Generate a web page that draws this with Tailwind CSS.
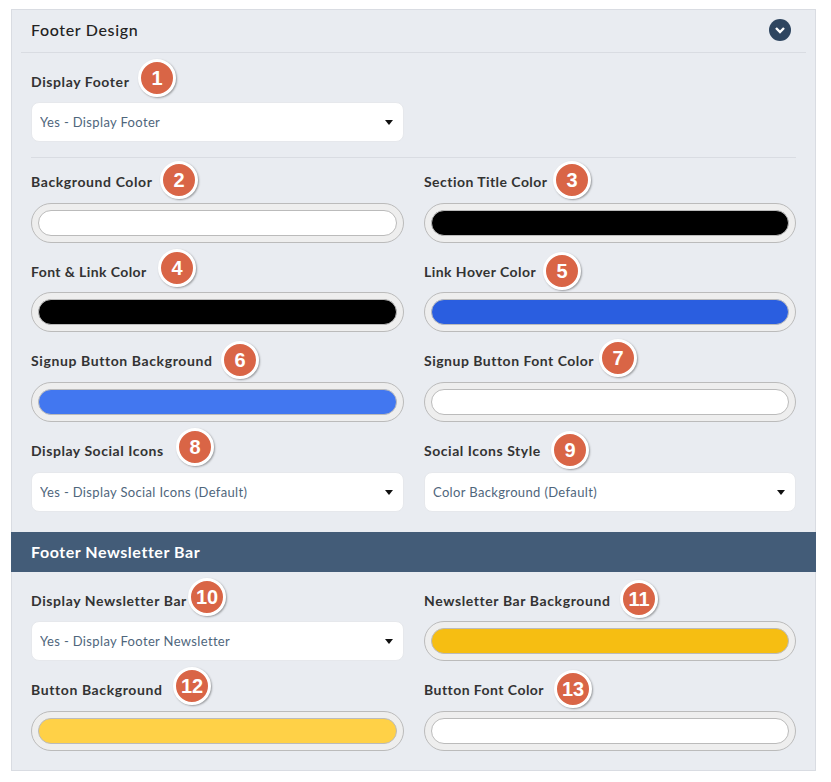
<!DOCTYPE html>
<html lang="en">
<head>
    <meta charset="UTF-8">
    <title>Footer Design</title>
    <script src="https://cdn.jsdelivr.net/npm/@tailwindcss/browser@4"></script>
</head>
<body class="bg-white font-['Lato','Liberation_Sans',sans-serif]">
    <div class="pt-[9px] pl-[11px] w-[816px]">
        <div class="border border-[#d9dce2] bg-[#e9ecf1] h-[762px]">
            <!-- Header -->
            <div class="mx-[9px] h-[43px] border-b border-[#d9dce2] pl-[10px] pr-[15px] pb-[2px] flex items-center justify-between">
                <h2 class="text-[16px] font-medium tracking-[0.65px] text-[#222]">Footer Design</h2>
                <span class="w-[22px] h-[22px] rounded-full bg-[#2f4660] flex items-center justify-center">
                    <svg width="12" height="9" viewBox="0 0 12 9" fill="none"><path d="M2 2l4 4 4-4" stroke="#fff" stroke-width="2.4"/></svg>
                </span>
            </div>

            <div class="px-[19px]">
                <!-- Display footer -->
                <div class="relative pt-[19px]">
                    <label class="block h-5 leading-5 mb-[10px] text-[14px] font-bold tracking-[0.6px] text-[#333]">Display Footer</label>
                    <span class="absolute left-[107px] top-[6px] w-[38px] h-[38px] rounded-full border-[3px] border-white bg-[#d96546] text-white font-['Liberation_Sans'] font-bold text-[20px] flex items-center justify-center shadow-[1px_1px_2px_rgba(0,0,0,0.35)]">1</span>
                    <div class="relative w-[373px]">
                        <select class="appearance-none w-full h-[39.5px] bg-white rounded-lg border border-[#e6e8ec] pl-2 pt-[2px] text-[13px] tracking-[0.35px] text-[#4f667c]"><option>Yes - Display Footer</option></select>
                        <svg class="absolute right-[11px] top-[18px]" width="8" height="5" viewBox="0 0 8 5"><path d="M0 0h8L4 5z" fill="#111"/></svg>
                    </div>
                </div>
                <div class="mt-[15.5px] border-b border-[#d9dce2]"></div>

                <!-- Colours -->
                <div class="grid grid-cols-[373px_372px] gap-x-[20px] gap-y-[19px] pt-[14.25px]">
                    <div class="relative">
                        <label class="block h-5 leading-5 mb-[10.5px] text-[14px] font-bold tracking-[0.6px] text-[#333]">Background Color</label>
                        <span class="absolute left-[129px] top-[-11px] w-[38px] h-[38px] rounded-full border-[3px] border-white bg-[#d96546] text-white font-['Liberation_Sans'] font-bold text-[20px] flex items-center justify-center shadow-[1px_1px_2px_rgba(0,0,0,0.35)]">2</span>
                        <div class="h-[40px] rounded-full border border-[#bbb] bg-[#eee] p-[6px]"><div class="h-full rounded-full border border-[#bbb] bg-white"></div></div>
                    </div>
                    <div class="relative">
                        <label class="block h-5 leading-5 mb-[10.5px] text-[14px] font-bold tracking-[0.45px] text-[#333]">Section Title Color</label>
                        <span class="absolute left-[129px] top-[-11px] w-[38px] h-[38px] rounded-full border-[3px] border-white bg-[#d96546] text-white font-['Liberation_Sans'] font-bold text-[20px] flex items-center justify-center shadow-[1px_1px_2px_rgba(0,0,0,0.35)]">3</span>
                        <div class="h-[40px] rounded-full border border-[#bbb] bg-[#eee] p-[6px]"><div class="h-full rounded-full border border-[#bbb] bg-black"></div></div>
                    </div>
                    <div class="relative">
                        <label class="block h-5 leading-5 mb-[10.5px] text-[14px] font-bold tracking-[0.4px] text-[#333]">Font &amp; Link Color</label>
                        <span class="absolute left-[127px] top-[-13px] w-[38px] h-[38px] rounded-full border-[3px] border-white bg-[#d96546] text-white font-['Liberation_Sans'] font-bold text-[20px] flex items-center justify-center shadow-[1px_1px_2px_rgba(0,0,0,0.35)]">4</span>
                        <div class="h-[40px] rounded-full border border-[#bbb] bg-[#eee] p-[6px]"><div class="h-full rounded-full border border-[#bbb] bg-black"></div></div>
                    </div>
                    <div class="relative">
                        <label class="block h-5 leading-5 mb-[10.5px] text-[14px] font-bold tracking-[0.45px] text-[#333]">Link Hover Color</label>
                        <span class="absolute left-[119px] top-[-10px] w-[38px] h-[38px] rounded-full border-[3px] border-white bg-[#d96546] text-white font-['Liberation_Sans'] font-bold text-[20px] flex items-center justify-center shadow-[1px_1px_2px_rgba(0,0,0,0.35)]">5</span>
                        <div class="h-[40px] rounded-full border border-[#bbb] bg-[#eee] p-[6px]"><div class="h-full rounded-full border border-[#bbb] bg-[#2a5ee0]"></div></div>
                    </div>
                    <div class="relative">
                        <label class="block h-5 leading-5 mb-[10.5px] text-[14px] font-bold tracking-[0.6px] text-[#333]">Signup Button Background</label>
                        <span class="absolute left-[190px] top-[-10px] w-[38px] h-[38px] rounded-full border-[3px] border-white bg-[#d96546] text-white font-['Liberation_Sans'] font-bold text-[20px] flex items-center justify-center shadow-[1px_1px_2px_rgba(0,0,0,0.35)]">6</span>
                        <div class="h-[40px] rounded-full border border-[#bbb] bg-[#eee] p-[6px]"><div class="h-full rounded-full border border-[#bbb] bg-[#4277f0]"></div></div>
                    </div>
                    <div class="relative">
                        <label class="block h-5 leading-5 mb-[10.5px] text-[14px] font-bold tracking-[0.5px] text-[#333]">Signup Button Font Color</label>
                        <span class="absolute left-[175px] top-[-12px] w-[38px] h-[38px] rounded-full border-[3px] border-white bg-[#d96546] text-white font-['Liberation_Sans'] font-bold text-[20px] flex items-center justify-center shadow-[1px_1px_2px_rgba(0,0,0,0.35)]">7</span>
                        <div class="h-[40px] rounded-full border border-[#bbb] bg-[#eee] p-[6px]"><div class="h-full rounded-full border border-[#bbb] bg-white"></div></div>
                    </div>
                    <div class="relative">
                        <label class="block h-5 leading-5 mb-[11.25px] text-[14px] font-bold tracking-[0.55px] text-[#333]">Display Social Icons</label>
                        <span class="absolute left-[145px] top-[-13px] w-[38px] h-[38px] rounded-full border-[3px] border-white bg-[#d96546] text-white font-['Liberation_Sans'] font-bold text-[20px] flex items-center justify-center shadow-[1px_1px_2px_rgba(0,0,0,0.35)]">8</span>
                        <div class="relative">
                            <select class="appearance-none w-full h-[39.5px] bg-white rounded-lg border border-[#e6e8ec] pl-2 pt-[2px] text-[13px] tracking-[0.35px] text-[#4f667c]"><option>Yes - Display Social Icons (Default)</option></select>
                            <svg class="absolute right-[11px] top-[18px]" width="8" height="5" viewBox="0 0 8 5"><path d="M0 0h8L4 5z" fill="#111"/></svg>
                        </div>
                    </div>
                    <div class="relative">
                        <label class="block h-5 leading-5 mb-[11.25px] text-[14px] font-bold tracking-[0.55px] text-[#333]">Social Icons Style</label>
                        <span class="absolute left-[127px] top-[-10px] w-[38px] h-[38px] rounded-full border-[3px] border-white bg-[#d96546] text-white font-['Liberation_Sans'] font-bold text-[20px] flex items-center justify-center shadow-[1px_1px_2px_rgba(0,0,0,0.35)]">9</span>
                        <div class="relative">
                            <select class="appearance-none w-full h-[39.5px] bg-white rounded-lg border border-[#e6e8ec] pl-2 pt-[2px] text-[13px] tracking-[0.35px] text-[#4f667c]"><option>Color Background (Default)</option></select>
                            <svg class="absolute right-[11px] top-[18px]" width="8" height="5" viewBox="0 0 8 5"><path d="M0 0h8L4 5z" fill="#111"/></svg>
                        </div>
                    </div>
                </div>
            </div>

            <!-- Newsletter bar -->
            <div class="mt-[20.5px] -mx-px h-[40px] bg-[#435c78] pl-[20px] flex items-center">
                <h3 class="text-[16px] font-bold tracking-[0.55px] text-white">Footer Newsletter Bar</h3>
            </div>

            <div class="px-[19px] pt-[18.5px] grid grid-cols-[373px_372px] gap-x-[20px] gap-y-[19px]">
                <div class="relative">
                    <label class="block h-5 leading-5 mb-[10.5px] text-[14px] font-bold tracking-[0.6px] text-[#333]">Display Newsletter Bar</label>
                    <span class="absolute left-[157px] top-[-13px] w-[38px] h-[38px] rounded-full border-[3px] border-white bg-[#d96546] text-white font-['Liberation_Sans'] font-bold text-[20px] flex items-center justify-center shadow-[1px_1px_2px_rgba(0,0,0,0.35)]">10</span>
                    <div class="relative">
                        <select class="appearance-none w-full h-[39.5px] bg-white rounded-lg border border-[#e6e8ec] pl-2 pt-[2px] text-[13px] tracking-[0.35px] text-[#4f667c]"><option>Yes - Display Footer Newsletter</option></select>
                        <svg class="absolute right-[11px] top-[18px]" width="8" height="5" viewBox="0 0 8 5"><path d="M0 0h8L4 5z" fill="#111"/></svg>
                    </div>
                </div>
                <div class="relative">
                    <label class="block h-5 leading-5 mb-[10.5px] text-[14px] font-bold tracking-[0.6px] text-[#333]">Newsletter Bar Background</label>
                    <span class="absolute left-[196px] top-[-11px] w-[38px] h-[38px] rounded-full border-[3px] border-white bg-[#d96546] text-white font-['Liberation_Sans'] font-bold text-[20px] flex items-center justify-center shadow-[1px_1px_2px_rgba(0,0,0,0.35)]">11</span>
                    <div class="h-[40px] rounded-full border border-[#bbb] bg-[#eee] p-[6px]"><div class="h-full rounded-full border border-[#bbb] bg-[#f6be12]"></div></div>
                </div>
                <div class="relative">
                    <label class="block h-5 leading-5 mb-[10.5px] text-[14px] font-bold tracking-[0.6px] text-[#333]">Button Background</label>
                    <span class="absolute left-[142px] top-[-13px] w-[38px] h-[38px] rounded-full border-[3px] border-white bg-[#d96546] text-white font-['Liberation_Sans'] font-bold text-[20px] flex items-center justify-center shadow-[1px_1px_2px_rgba(0,0,0,0.35)]">12</span>
                    <div class="h-[40px] rounded-full border border-[#bbb] bg-[#eee] p-[6px]"><div class="h-full rounded-full border border-[#bbb] bg-[#ffd147]"></div></div>
                </div>
                <div class="relative">
                    <label class="block h-5 leading-5 mb-[10.5px] text-[14px] font-bold tracking-[0.45px] text-[#333]">Button Font Color</label>
                    <span class="absolute left-[130px] top-[-10px] w-[38px] h-[38px] rounded-full border-[3px] border-white bg-[#d96546] text-white font-['Liberation_Sans'] font-bold text-[20px] flex items-center justify-center shadow-[1px_1px_2px_rgba(0,0,0,0.35)]">13</span>
                    <div class="h-[40px] rounded-full border border-[#bbb] bg-[#eee] p-[6px]"><div class="h-full rounded-full border border-[#bbb] bg-white"></div></div>
                </div>
            </div>
        </div>
    </div>
</body>
</html>
